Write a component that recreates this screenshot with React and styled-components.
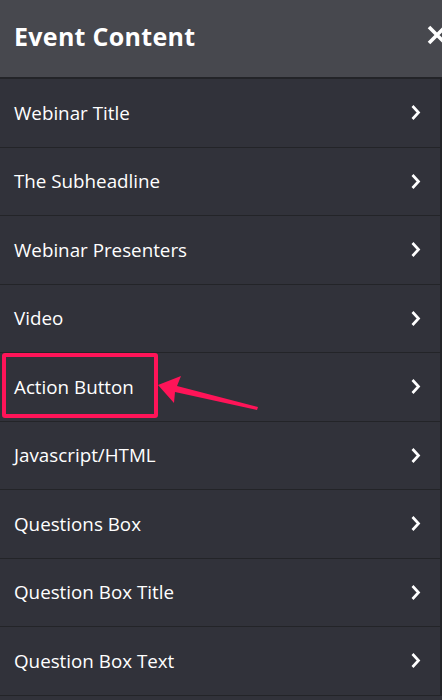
import styled, { createGlobalStyle } from 'styled-components';

const GlobalStyle = createGlobalStyle`
  html, body {
    margin: 0;
    padding: 0;
    background: #31323a;
  }
  body {
    font-family: "Open Sans", "Liberation Sans", sans-serif;
  }
`;

const Panel = styled.div`
  width: 442px;
  height: 700px;
  overflow: hidden;
  background: #31323a;
  color: #fff;
`;

const Header = styled.div`
  height: 77px;
  display: flex;
  align-items: center;
  justify-content: space-between;
  padding-left: 14px;
  background: #47484e;
  border-bottom: 2px solid #232428;
`;

const Title = styled.h2`
  margin: 0;
  margin-top: -6px;
  font-size: 25px;
  font-weight: 700;
  letter-spacing: 0.3px;
`;

const Close = styled.span`
  display: flex;
  margin-right: -6px;
  margin-top: -8px;
`;

const List = styled.div`
  border-right: 2px solid #232428;
`;

const Row = styled.div`
  position: relative;
  height: 67.5px;
  display: flex;
  align-items: center;
  justify-content: space-between;
  padding: 0 19px 0 14px;
  border-bottom: 1px solid #232428;
  font-size: 18.8px;
`;

const Highlight = styled.div`
  position: absolute;
  left: 2px;
  top: 0;
  width: 148px;
  height: 57px;
  border: 4px solid #ff1458;
  border-radius: 3px;
`;

const Arrow = styled.svg`
  position: absolute;
  left: 0;
  top: 0;
  overflow: visible;
`;

const items = [
  'Webinar Title',
  'The Subheadline',
  'Webinar Presenters',
  'Video',
  'Action Button',
  'Javascript/HTML',
  'Questions Box',
  'Question Box Title',
  'Question Box Text',
];

function Chevron() {
  return (
    <svg width="11" height="17" viewBox="0 0 11 17">
      <path d="M2.5 2 L8.5 8.5 L2.5 15" fill="none" stroke="#fff" strokeWidth="2.7" />
    </svg>
  );
}

export default function App() {
  return (
    <>
      <GlobalStyle />
      <Panel>
        <Header>
          <Title>Event Content</Title>
          <Close>
            <svg width="22" height="22" viewBox="0 0 22 22">
              <path d="M3 3 L19 19 M19 3 L3 19" stroke="#fff" strokeWidth="3.6" />
            </svg>
          </Close>
        </Header>
        <List>
          {items.map((label) => (
            <Row key={label}>
              <span>{label}</span>
              <Chevron />
              {label === 'Action Button' && (
                <>
                  <Highlight />
                  <Arrow width="1" height="1">
                    <polygon
                      points="158,32 181,23 177,33 258,54 257,57 175,39 174,50"
                      fill="#ff1458"
                    />
                  </Arrow>
                </>
              )}
            </Row>
          ))}
        </List>
      </Panel>
    </>
  );
}
